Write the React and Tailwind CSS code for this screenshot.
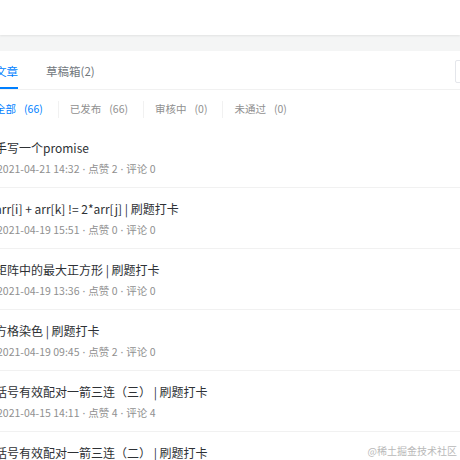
import React from 'react';

const filters = [
  { label: '全部', count: '(66)', active: true },
  { label: '已发布', count: '(66)' },
  { label: '审核中', count: '(0)' },
  { label: '未通过', count: '(0)' },
];

const posts = [
  { title: '手写一个promise', time: '2021-04-21 14:32', likes: 2, comments: 0 },
  { title: 'arr[i] + arr[k] != 2*arr[j] | 刷题打卡', time: '2021-04-19 15:51', likes: 0, comments: 0 },
  { title: '矩阵中的最大正方形 | 刷题打卡', time: '2021-04-19 13:36', likes: 0, comments: 0 },
  { title: '方格染色 | 刷题打卡', time: '2021-04-19 09:45', likes: 2, comments: 0 },
  { title: '括号有效配对一箭三连（三） | 刷题打卡', time: '2021-04-15 14:11', likes: 4, comments: 4 },
  { title: '括号有效配对一箭三连（二） | 刷题打卡', time: '2021-04-14 10:20', likes: 1, comments: 0 },
];

// 半角的分隔点
const Dot = () => <span className="mx-[3px] font-['Noto_Sans',sans-serif]">·</span>;

export default function App() {
  return (
    <div
      className="relative w-[460px] h-[460px] overflow-hidden bg-[#f4f5f5]"
      style={{ fontFamily: '"Noto Sans CJK SC", "Noto Sans", sans-serif' }}
    >
      {/* 顶部栏 */}
      <div className="h-[35px] bg-white shadow-[0_1px_2px_rgba(0,0,0,0.08)]" />

      {/* 内容面板 */}
      <div className="mt-[16px] bg-white">
        <div className="flex items-center h-[39px] border-b border-[#f1f1f1] -ml-[5px]">
          <div className="relative h-full flex items-center pt-[3px] text-[11.5px] text-[#007fff]">
            文章
            <div className="absolute left-0 right-0 bottom-0 h-[2px] bg-[#007fff]" />
          </div>
          <div className="ml-[28px] pt-[3px] text-[11.5px] text-[#71777c]">草稿箱(2)</div>
          <div className="ml-auto mr-[-200px] mt-[2px] w-[205px] h-[23px] border border-[#e4e6eb] rounded-[2px]" />
        </div>

        <div className="flex items-center h-[37px] pt-[1px] -ml-[5px] text-[10.5px]">
          {filters.map((f, i) => (
            <div key={f.label} className="flex items-center">
              {i > 0 && <div className="w-px h-[17px] bg-[#f1f1f1] mx-[11px]" />}
              <span className={f.active ? 'text-[#007fff]' : 'text-[#909090]'}>{f.label}</span>
              <span className={`ml-[8px] mr-[4px] ${f.active ? 'text-[#007fff]' : 'text-[#909090]'}`}>{f.count}</span>
            </div>
          ))}
        </div>

        <div>
          {posts.map((p) => (
            <div key={p.time} className="pt-[13px] pb-[10px] border-b border-[#f1f1f1]">
              <div className="-ml-[5px] text-[12px] leading-[16px] text-[#2e3135] whitespace-nowrap">{p.title}</div>
              <div className="-ml-[3px] mt-[5px] text-[10.5px] leading-[16px] text-[#909090] whitespace-nowrap">
                {p.time}<Dot />点赞 {p.likes}<Dot />评论 {p.comments}
              </div>
            </div>
          ))}
        </div>
      </div>

      <div className="absolute right-[3px] bottom-[2px] text-[10px] text-[#b9b9b9]">@稀土掘金技术社区</div>
    </div>
  );
}
